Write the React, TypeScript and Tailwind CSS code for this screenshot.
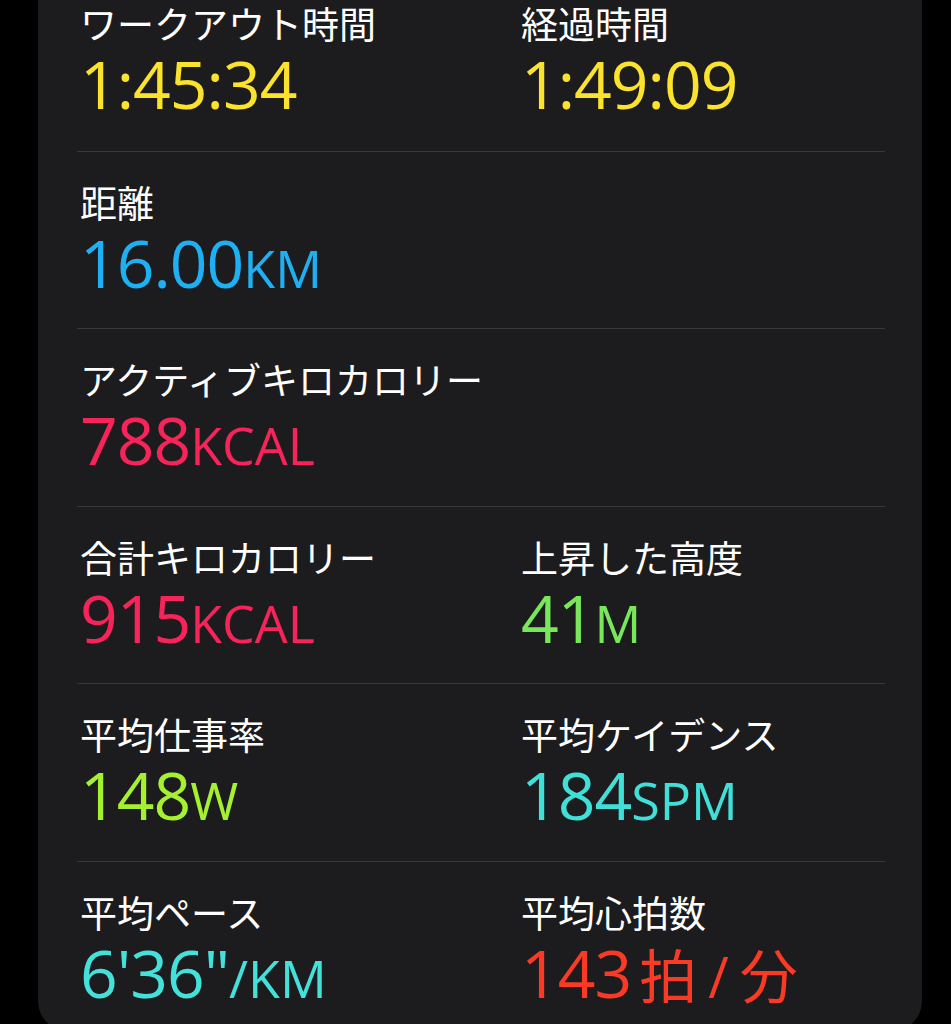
import React from 'react';

interface Metric {
  label: string;
  value: string;
  unit?: string;
  color: string;
}

const ROWS: Metric[][] = [
  [
    { label: 'ワークアウト時間', value: '1:45:34', color: 'text-[#fbe22c]' },
    { label: '経過時間', value: '1:49:09', color: 'text-[#fbe22c]' },
  ],
  [{ label: '距離', value: '16.00', unit: 'KM', color: 'text-[#1fb0f4]' }],
  [{ label: 'アクティブキロカロリー', value: '788', unit: 'KCAL', color: 'text-[#f7245a]' }],
  [
    { label: '合計キロカロリー', value: '915', unit: 'KCAL', color: 'text-[#f7245a]' },
    { label: '上昇した高度', value: '41', unit: 'M', color: 'text-[#78e85a]' },
  ],
  [
    { label: '平均仕事率', value: '148', unit: 'W', color: 'text-[#a6f12f]' },
    { label: '平均ケイデンス', value: '184', unit: 'SPM', color: 'text-[#40e0d9]' },
  ],
];

const labelFont = "font-['Noto_Sans_CJK_JP',sans-serif]";
const valueFont = "font-['Open_Sans','Noto_Sans_CJK_JP',sans-serif] font-medium";

function MetricCell({ m }: { m: Metric }) {
  return (
    <div className="flex flex-col pl-[3px]">
      <div className={`${labelFont} text-[37px] leading-[44px] text-white`}>{m.label}</div>
      <div className={`${valueFont} ${m.color} mt-[5px] text-[66px] leading-[66px] tracking-[-1px] whitespace-nowrap`}>
        {m.value}
        {m.unit && <span className="text-[52px] leading-none tracking-normal">{m.unit}</span>}
      </div>
    </div>
  );
}

function HeartRateCell() {
  return (
    <div className="flex flex-col pl-[3px]">
      <div className={`${labelFont} text-[37px] leading-[44px] text-white`}>平均心拍数</div>
      <div className={`${valueFont} mt-[5px] text-[66px] leading-[66px] tracking-[-1px] whitespace-nowrap text-[#fa3a24]`}>
        143
        <span className={`${labelFont} ml-[8px] text-[58px] font-normal leading-none`}>拍</span>
        <span className="mx-[12px] text-[56px] leading-none">/</span>
        <span className={`${labelFont} text-[58px] font-normal leading-none`}>分</span>
      </div>
    </div>
  );
}

export default function App() {
  return (
    <div className="min-h-[1024px] overflow-hidden bg-black">
      <div className="-mt-[27px] ml-[38px] mr-[29px] rounded-[30px] bg-[#1c1c1e] pl-[39px] pr-[37px]">
        {ROWS.map((row, i) => (
          <div
            key={i}
            className={`grid h-[177.5px] grid-cols-[441px_1fr] pt-[28px] ${i > 0 ? 'border-t border-[#38383a]' : ''}`}
          >
            {row.map((m) => (
              <MetricCell key={m.label} m={m} />
            ))}
          </div>
        ))}
        <div className="grid h-[170px] grid-cols-[441px_1fr] border-t border-[#38383a] pt-[28px]">
          <div className="flex flex-col pl-[3px]">
            <div className={`${labelFont} text-[37px] leading-[44px] text-white`}>平均ペース</div>
            <div className={`${valueFont} mt-[5px] text-[66px] leading-[66px] tracking-[-1px] whitespace-nowrap text-[#44e1db]`}>
              6'36"
              <span className="text-[52px] leading-none tracking-normal">/KM</span>
            </div>
          </div>
          <HeartRateCell />
        </div>
      </div>
    </div>
  );
}
